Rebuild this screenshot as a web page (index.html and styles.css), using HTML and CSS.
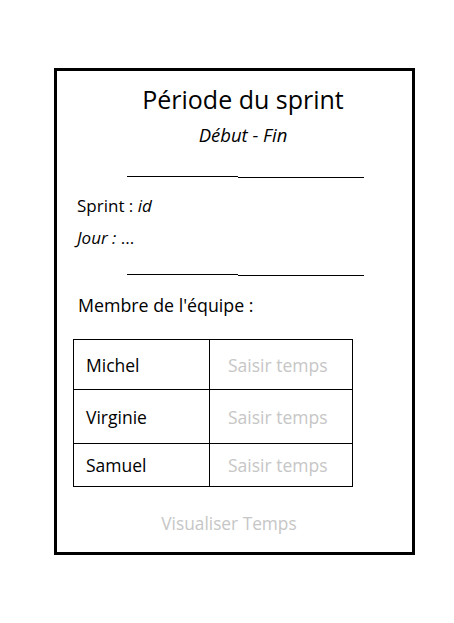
FILE: index.html
```html
<!DOCTYPE html>
<html lang="fr">
<head>
<meta charset="utf-8">
<title>Période du sprint</title>
<link rel="stylesheet" href="styles.css">
</head>
<body>
<div class="card">
  <h1 class="title">Période du sprint</h1>
  <p class="dates"><em>Début - Fin</em></p>
  <div class="sep sep-top"><span class="seg a"></span><span class="seg b"></span></div>
  <p class="info info-sprint">Sprint : <em>id</em></p>
  <p class="info info-day"><em>Jour :</em> ...</p>
  <div class="sep sep-mid"><span class="seg a"></span><span class="seg b"></span></div>
  <p class="members-label">Membre de l'équipe :</p>
  <table class="members">
    <tr class="r1"><td class="name">Michel</td><td class="time">Saisir temps</td></tr>
    <tr class="r2"><td class="name">Virginie</td><td class="time">Saisir temps</td></tr>
    <tr class="r3"><td class="name">Samuel</td><td class="time">Saisir temps</td></tr>
  </table>
  <p class="view">Visualiser Temps</p>
</div>
</body>
</html>
```
FILE: styles.css
```css
html, body {
  margin: 0;
  padding: 0;
  background: #ffffff;
}
body {
  font-family: "Open Sans", "Noto Sans", sans-serif;
  color: #000;
  padding: 68px 0 0 54px;
}
.card {
  box-sizing: border-box;
  width: 361px;
  height: 487px;
  border: 3px solid #000;
  display: flex;
  flex-direction: column;
  align-items: flex-start;
}
.title {
  align-self: stretch;
  margin: 11px 0 0 0;
  font-size: 25px;
  font-weight: 400;
  line-height: 34px;
  text-align: center;
  padding-left: 17px;
}
.dates {
  align-self: stretch;
  margin: 7px 0 0 0;
  font-size: 18.5px;
  line-height: 24px;
  text-align: center;
  padding-left: 17px;
}
.sep {
  display: flex;
  align-items: flex-start;
  margin-left: 70px;
}
.sep-top { margin-top: 29px; }
.sep-mid { margin-top: 24px; }
.seg {
  display: block;
  height: 1px;
  background: #000;
}
.seg.a { width: 111px; }
.seg.b { width: 126px; margin-top: 1px; }
.info {
  margin: 0;
  font-size: 17px;
  line-height: 24px;
  padding-left: 20px;
}
.info-sprint { margin-top: 16px; }
.info-day { margin-top: 8px; }
.members-label {
  margin: 16px 0 0 0;
  padding-left: 21px;
  font-size: 17.8px;
  line-height: 26px;
}
.members {
  margin: 21px 0 0 16px;
  border-collapse: collapse;
  table-layout: fixed;
  width: 280px;
  font-size: 17.5px;
}
.members td {
  border: 1px solid #000;
  padding: 0;
  vertical-align: middle;
}
.members .name {
  width: 123px;
  padding-left: 12px;
}
.members .time {
  padding-left: 18px;
  color: #c6c6c6;
}
.members .r1 td { height: 49px; }
.members .r2 td { height: 53px; }
.members .r3 td { height: 42px; }
.view {
  align-self: stretch;
  margin: 25px 0 0 0;
  text-align: center;
  padding-right: 11px;
  font-size: 17.3px;
  line-height: 24px;
  color: #c6c6c6;
}
```
